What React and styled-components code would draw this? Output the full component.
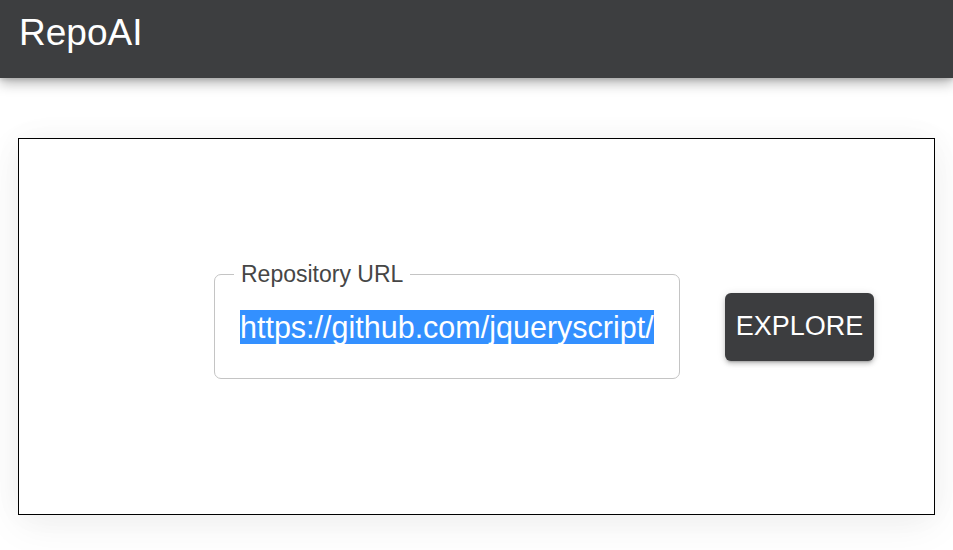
import React from "react";
import styled, { createGlobalStyle } from "styled-components";

const GlobalStyle = createGlobalStyle`
  html, body {
    margin: 0;
    padding: 0;
    background: #ffffff;
    font-family: "Liberation Sans", Arial, sans-serif;
  }
  * { box-sizing: border-box; }
`;

const Page = styled.div`
  min-height: 550px;
  background: #ffffff;
  overflow: hidden;
`;

const Header = styled.header`
  height: 78px;
  background: #3d3e40;
  display: flex;
  align-items: flex-start;
  padding: 14px 19px 0;
  box-shadow: 0 5px 12px rgba(0, 0, 0, 0.3), 0 2px 4px rgba(0, 0, 0, 0.12);
  position: relative;
  z-index: 1;
`;

const Title = styled.h1`
  margin: 0;
  font-family: "Liberation Sans", Arial, sans-serif;
  font-weight: 400;
  font-size: 37px;
  line-height: 37px;
  color: #ffffff;
`;

const Main = styled.main`
  padding: 60px 18px 0;
`;

const Card = styled.section`
  height: 377px;
  border: 1px solid #000000;
  background: #ffffff;
  display: flex;
  align-items: center;
  padding-left: 195px;
  box-shadow: 0 10px 40px rgba(0, 0, 0, 0.06), 0 0 30px rgba(0, 0, 0, 0.03);
`;

const Row = styled.div`
  display: flex;
  align-items: center;
  gap: 45px;
`;

const Field = styled.div`
  position: relative;
  width: 466px;
  height: 105px;
  border: 1px solid #c4c4c4;
  border-radius: 7px;
  padding: 0 25px;
  display: flex;
  align-items: center;
`;

const FieldLabel = styled.span`
  position: absolute;
  top: -14px;
  left: 19px;
  padding: 0 7px;
  background: #ffffff;
  font-size: 23px;
  line-height: 26px;
  color: #464646;
  white-space: nowrap;
`;

const Value = styled.div`
  width: 100%;
  overflow: hidden;
  white-space: nowrap;
  font-size: 30.5px;
  line-height: 34px;
  color: #ffffff;
`;

const Selected = styled.span`
  background: #3390ff;
  color: #ffffff;
`;

const Button = styled.button`
  width: 149px;
  height: 68px;
  border: none;
  border-radius: 6px;
  background: #3c3d3f;
  color: #ffffff;
  font-family: "Liberation Sans", Arial, sans-serif;
  font-size: 27px;
  letter-spacing: 0;
  padding: 0;
  cursor: pointer;
  box-shadow: 0 3px 2px -2px rgba(0, 0, 0, 0.2), 0 3px 4px rgba(0, 0, 0, 0.16),
    0 1px 8px rgba(0, 0, 0, 0.12);
`;

export default function App() {
  return (
    <Page>
      <GlobalStyle />
      <Header>
        <Title>RepoAI</Title>
      </Header>
      <Main>
        <Card>
          <Row>
            <Field>
              <FieldLabel>Repository URL</FieldLabel>
              <Value>
                <Selected>https://github.com/jqueryscript/</Selected>
              </Value>
            </Field>
            <Button>EXPLORE</Button>
          </Row>
        </Card>
      </Main>
    </Page>
  );
}
